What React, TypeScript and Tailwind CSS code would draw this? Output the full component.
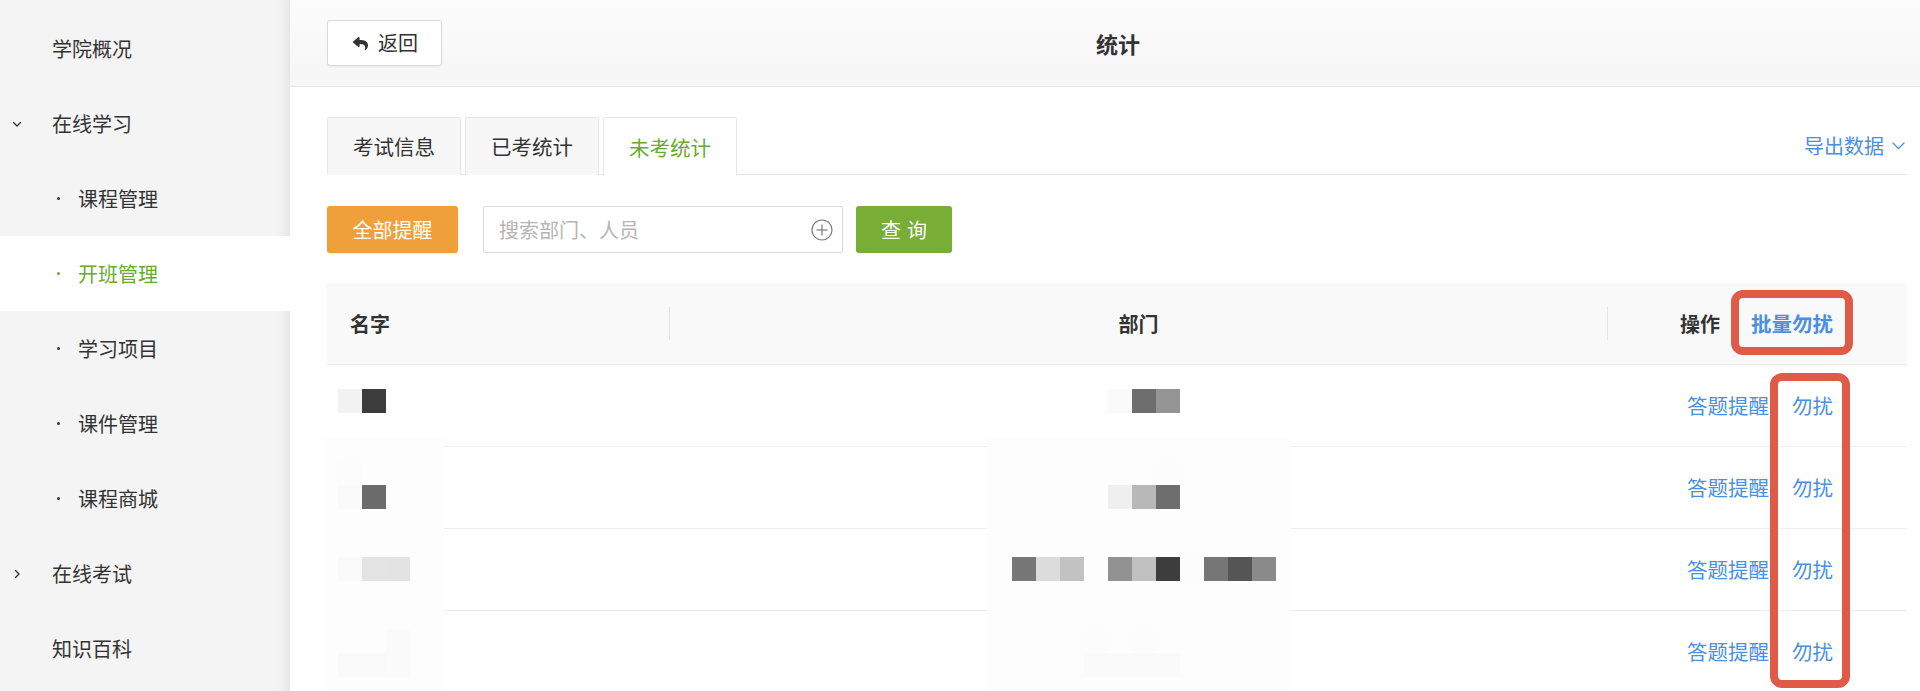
import { FaReply } from "react-icons/fa";

type Item = { label: string; level: number; chevron?: "down" | "right"; active?: boolean };

const items: Item[] = [
  { label: "学院概况", level: 0 },
  { label: "在线学习", level: 0, chevron: "down" },
  { label: "课程管理", level: 1 },
  { label: "开班管理", level: 1, active: true },
  { label: "学习项目", level: 1 },
  { label: "课件管理", level: 1 },
  { label: "课程商城", level: 1 },
  { label: "在线考试", level: 0, chevron: "right" },
  { label: "知识百科", level: 0 },
];

type Block = [number, number, string];

const nameBlocks: Block[] = [
  [338, 389, "#f2f2f2"], [362, 389, "#3c3c3c"],
  [338, 461, "#fcfcfc"], [338, 485, "#fafafa"], [362, 485, "#6b6b6b"],
  [338, 557, "#fafafa"], [362, 557, "#e4e4e4"], [386, 557, "#e3e3e3"],
  [386, 629, "#fbfbfb"], [338, 653, "#fafafa"], [362, 653, "#fafafa"], [386, 653, "#fbfbfb"],
];

const deptBlocks: Block[] = [
  [1084, 389, "#fefefe"], [1108, 389, "#fafafa"], [1132, 389, "#6e6e6e"], [1156, 389, "#949494"],
  [1156, 461, "#fcfcfc"],
  [1084, 485, "#fdfdfd"], [1108, 485, "#efefef"], [1132, 485, "#b8b8b8"], [1156, 485, "#6e6e6e"],
  [1012, 557, "#777777"], [1036, 557, "#dcdcdc"], [1060, 557, "#c2c2c2"], [1108, 557, "#929292"],
  [1132, 557, "#c0c0c0"], [1156, 557, "#3d3d3d"], [1180, 557, "#fcfcfc"], [1204, 557, "#767676"],
  [1228, 557, "#555555"], [1252, 557, "#8a8a8a"],
  [1084, 629, "#fcfcfc"], [1132, 629, "#fcfcfc"],
  [1084, 653, "#fafafa"], [1108, 653, "#fafafa"], [1132, 653, "#fafafa"], [1156, 653, "#fafafa"],
];

function Chevron({ dir }: { dir: "down" | "right" }) {
  return (
    <svg width="12" height="12" viewBox="0 0 12 12" fill="none" stroke="#333" strokeWidth="1.4" strokeLinecap="round" strokeLinejoin="round">
      {dir === "down" ? <polyline points="2.5,4.5 6,8 9.5,4.5" /> : <polyline points="4.5,2.5 8,6 4.5,9.5" />}
    </svg>
  );
}

function Sidebar() {
  return (
    <div className="w-[290px] shrink-0 h-full bg-[#f4f4f4] shadow-[inset_-14px_0_12px_-10px_rgba(0,0,0,0.07)] pt-[11px]">
      {items.map((it) => (
        <div
          key={it.label}
          className={`h-[75px] flex items-center text-[20px] ${it.active ? "bg-white text-[#6aaa2e]" : "text-[#333333]"}`}
        >
          {it.level === 0 ? (
            <>
              <span className="w-[52px] flex items-center pl-[11px]">
                {it.chevron ? <Chevron dir={it.chevron} /> : null}
              </span>
              <span>{it.label}</span>
            </>
          ) : (
            <>
              <span className={`ml-[57px] w-[3px] h-[3px] rounded-full ${it.active ? "bg-[#6aaa2e]" : "bg-[#333]"}`} />
              <span className="ml-[18px]">{it.label}</span>
            </>
          )}
        </div>
      ))}
    </div>
  );
}

function Header() {
  return (
    <div className="h-[87px] shrink-0 bg-gradient-to-b from-[#fcfcfc] to-[#f6f6f6] border-b border-[#e6e6e6] grid grid-cols-[1fr_auto_1fr] items-center pl-[37px] pr-[13px]">
      <div>
        <button className="w-[115px] h-[46px] bg-white border border-[#dadada] rounded-[3px] shadow-[0_1px_2px_rgba(0,0,0,0.06)] flex items-center pl-[25px] gap-[10px] text-[20px] text-[#333]">
          <FaReply className="text-[15px] text-[#333]" />
          <span>返回</span>
        </button>
      </div>
      <div className="text-[22px] font-bold text-[#333] pl-[2px]">统计</div>
      <div />
    </div>
  );
}

function Tabs() {
  const tabs = ["考试信息", "已考统计", "未考统计"];
  return (
    <div className="h-[58px] flex items-end justify-between border-b border-[#e8e8e8]">
      <div className="flex gap-[4px] h-full">
        {tabs.map((t, i) => {
          const active = i === 2;
          return (
            <div
              key={t}
              className={`w-[134px] flex items-center justify-center text-[20.5px] border border-b-0 border-[#e6e6e6] rounded-t-[2px] ${
                active ? "bg-white text-[#6aaa2e] h-[59px] -mb-px" : "bg-[#f7f7f7] text-[#333] h-[58px]"
              }`}
            >
              {t}
            </div>
          );
        })}
      </div>
      <div className="self-center flex items-center gap-[8px] text-[20px] text-[#4a90e2] pr-[2px]">
        <span>导出数据</span>
        <svg width="13" height="8" viewBox="0 0 13 8" fill="none" stroke="#4a90e2" strokeWidth="1.3" strokeLinecap="round" strokeLinejoin="round">
          <polyline points="1,1 6.5,6.5 12,1" />
        </svg>
      </div>
    </div>
  );
}

function Toolbar() {
  return (
    <div className="mt-[31px] h-[47px] flex items-center">
      <button className="w-[131px] h-[47px] bg-[#f0a03a] text-white text-[20px] rounded-[3px] shadow-[0_1px_2px_rgba(0,0,0,0.08)]">全部提醒</button>
      <div className="ml-[25px] w-[360px] h-[47px] border border-[#d9d9d9] rounded-[2px] bg-white flex items-center pl-[15px] pr-[9px]">
        <span className="flex-1 text-[20px] text-[#b5b5b5]">搜索部门、人员</span>
        <svg width="22" height="22" viewBox="0 0 22 22" fill="none" stroke="#7a7a7a" strokeWidth="1.2">
          <circle cx="11" cy="11" r="10" />
          <line x1="11" y1="5.5" x2="11" y2="16.5" />
          <line x1="5.5" y1="11" x2="16.5" y2="11" />
        </svg>
      </div>
      <button className="ml-[13px] w-[96px] h-[47px] bg-[#78ad36] text-white text-[20px] rounded-[3px] tracking-[6px] pl-[6px]">查询</button>
    </div>
  );
}

function Table() {
  const rows = [0, 1, 2, 3];
  return (
    <div className="mt-[30px]">
      <div className="h-[82px] bg-[#f9f9f9] border-b border-[#ececec] grid grid-cols-[342px_938px_1fr] items-center text-[20px] font-bold text-[#333]">
        <div className="pl-[23px]">名字</div>
        <div className="flex items-center">
          <span className="w-px h-[33px] bg-[#e4e4e4]" />
          <span className="flex-1 text-center">部门</span>
        </div>
        <div className="flex items-center">
          <span className="w-px h-[33px] bg-[#e4e4e4]" />
          <span className="flex-1 flex justify-end items-center gap-[31px] pr-[74px]">
            <span>操作</span>
            <span className="text-[#4a90e2] text-[20.5px]">批量勿扰</span>
          </span>
        </div>
      </div>
      {rows.map((r) => (
        <div key={r} className="h-[82px] border-b border-[#efefef] grid grid-cols-[342px_938px_1fr] items-center text-[20.5px]">
          <div />
          <div />
          <div className="flex justify-end items-center gap-[23px] pr-[74px] text-[#4a90e2]">
            <span>答题提醒</span>
            <span>勿扰</span>
          </div>
        </div>
      ))}
    </div>
  );
}

export default function App() {
  return (
    <div className="relative w-[1920px] h-[691px] overflow-hidden bg-white flex font-['Noto_Sans_CJK_SC','Noto_Sans',sans-serif]">
      <Sidebar />
      <div className="flex-1 flex flex-col min-w-0">
        <Header />
        <div className="pl-[37px] pr-[13px] pt-[30px]">
          <Tabs />
          <Toolbar />
          <Table />
        </div>
      </div>

      {/* redaction mosaics lying over the table */}
      <div className="absolute left-[325px] top-[437px] w-[119px] h-[260px] bg-[#fdfdfd]" />
      <div className="absolute left-[987px] top-[437px] w-[303px] h-[260px] bg-[#fdfdfd]" />
      {[...nameBlocks, ...deptBlocks].map(([x, y, c], i) => (
        <div key={i} className="absolute w-[24px] h-[24px]" style={{ left: x, top: y, backgroundColor: c }} />
      ))}

      {/* annotation boxes */}
      <div className="absolute left-[1731px] top-[290px] w-[122px] h-[65px] border-[8px] border-[#e05a48] rounded-[12px]" />
      <div className="absolute left-[1770px] top-[373px] w-[80px] h-[315px] border-[8px] border-[#e05a48] rounded-[12px]" />
    </div>
  );
}
